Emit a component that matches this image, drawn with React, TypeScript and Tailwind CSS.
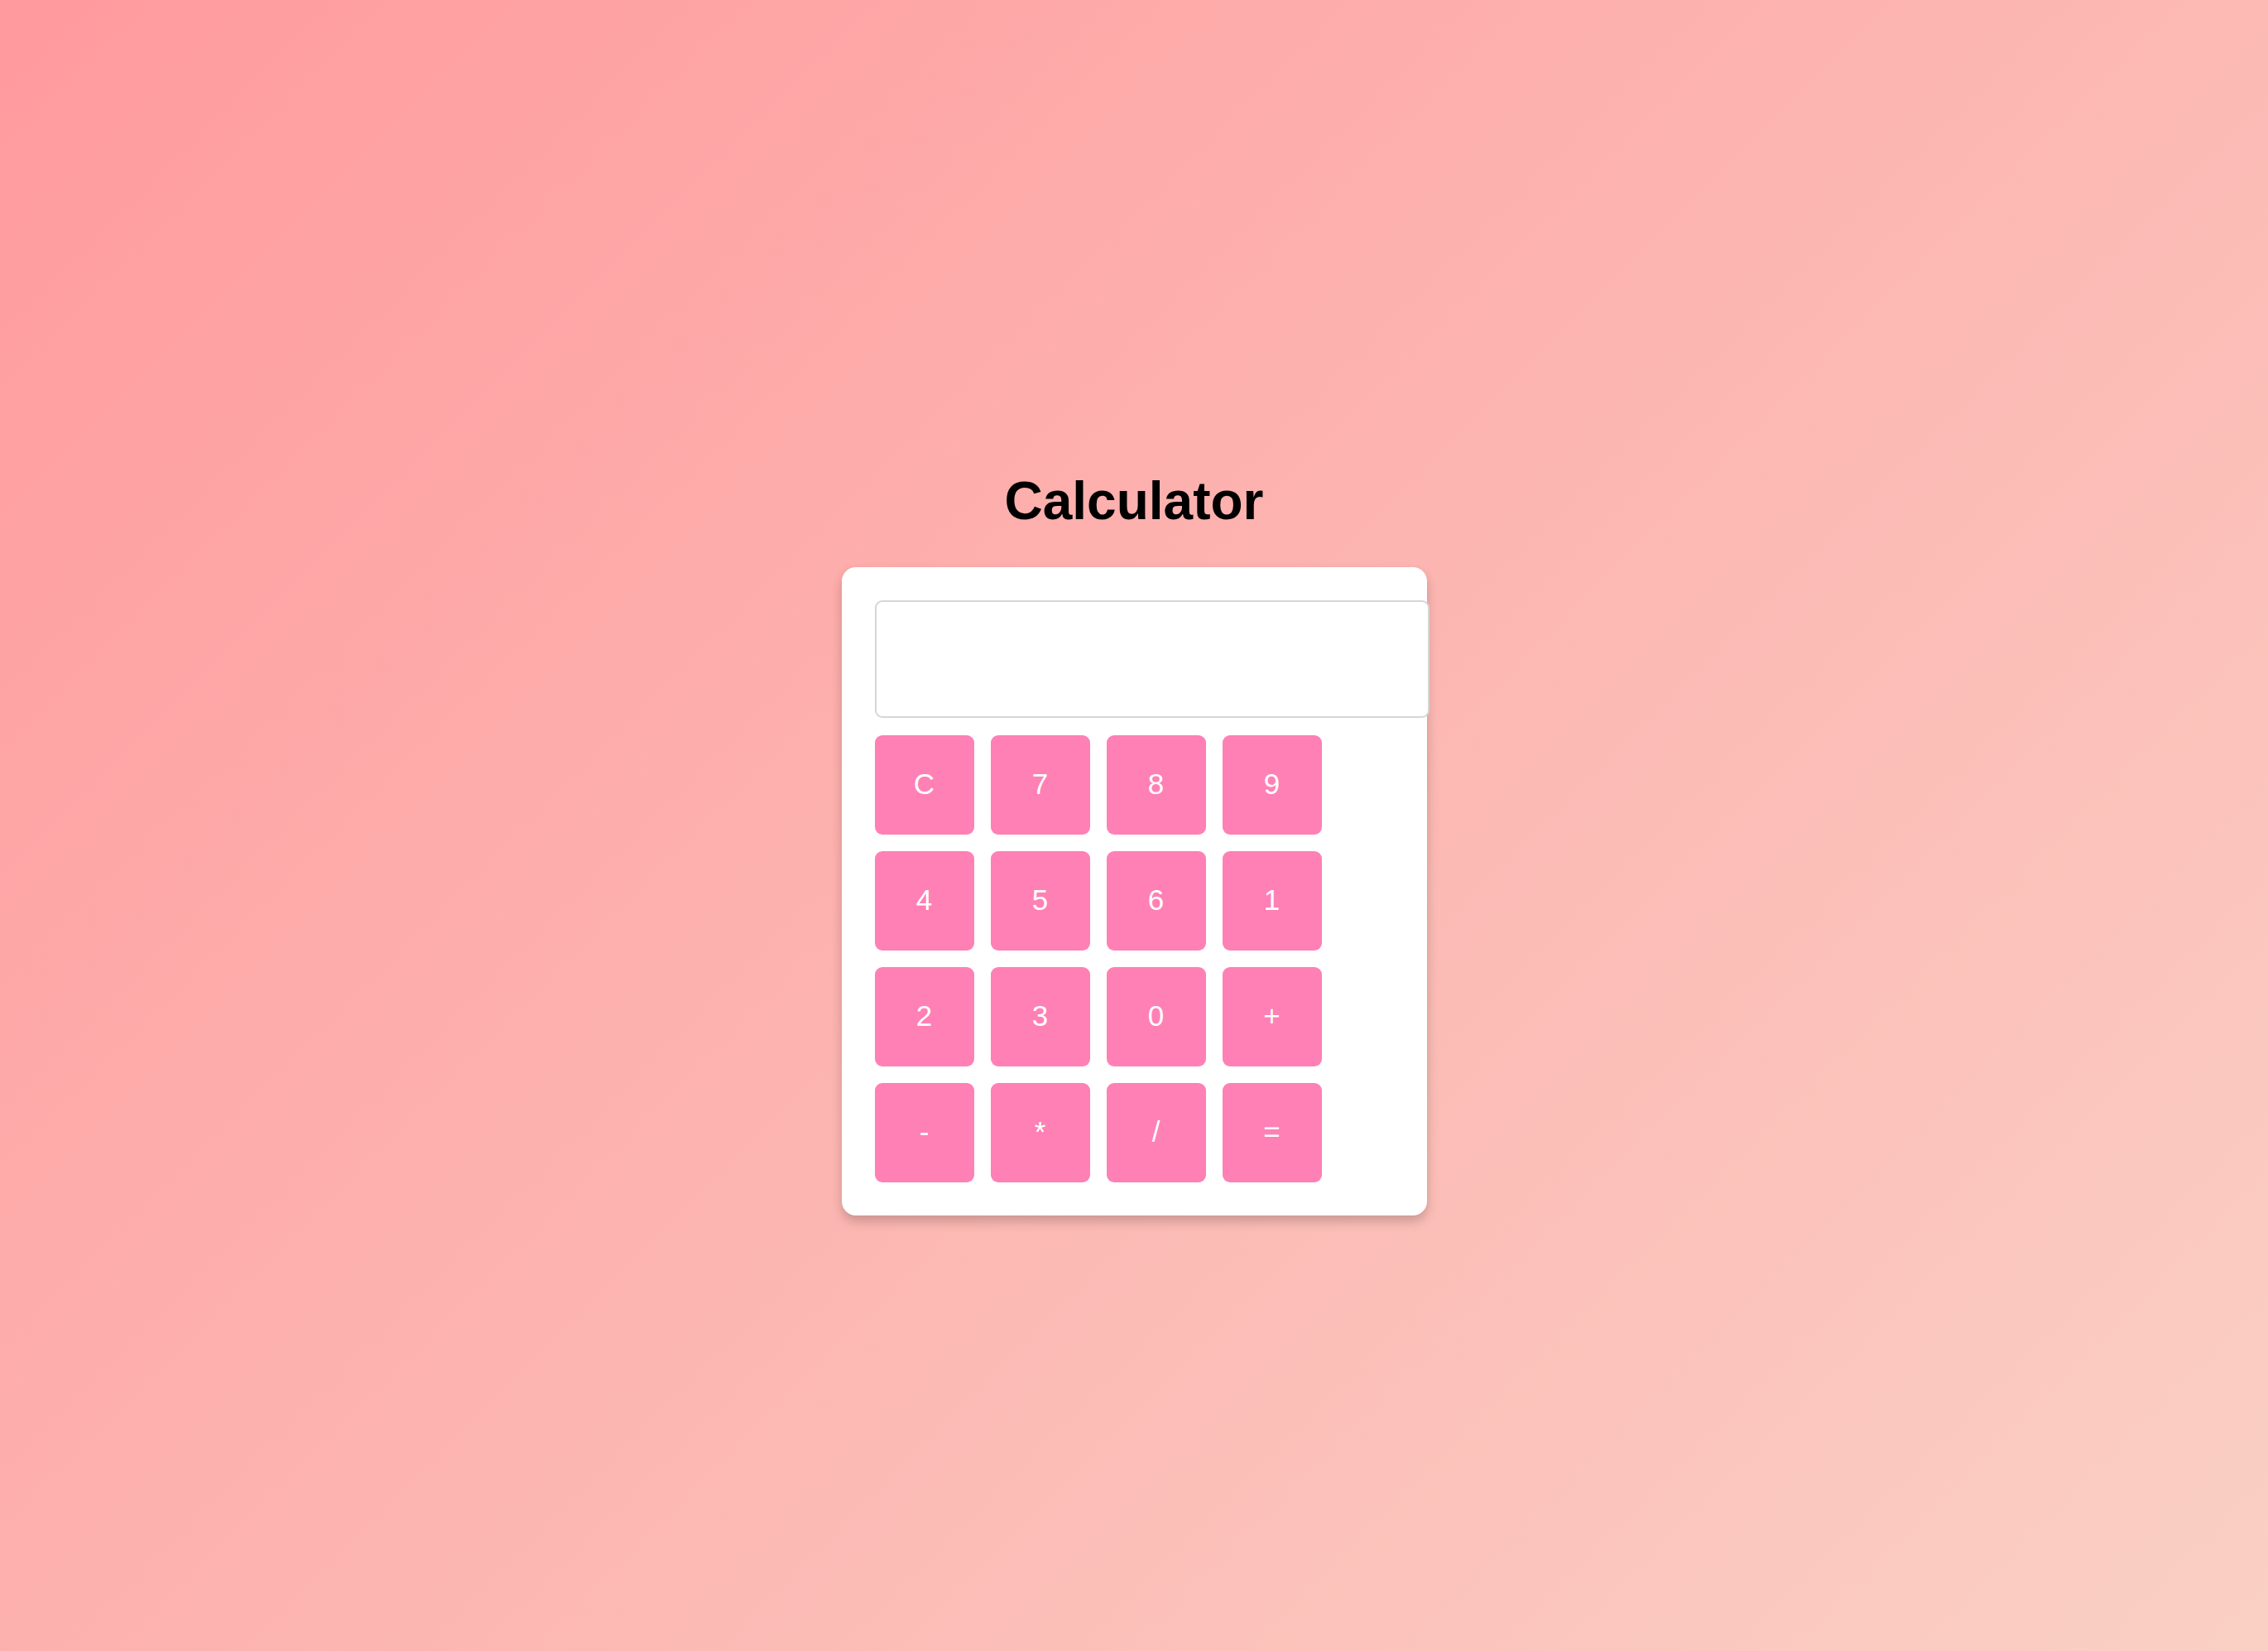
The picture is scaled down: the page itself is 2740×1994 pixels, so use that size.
const keys = ['C', '7', '8', '9', '4', '5', '6', '1', '2', '3', '0', '+', '-', '*', '/', '=']

export default function App() {
  return (
    <div className="min-h-screen flex flex-col items-center justify-center bg-[linear-gradient(135deg,#ff9a9e_0%,#fad0c4_100%)] font-['Liberation_Sans',Arial,sans-serif]">
      <h1 className="mt-[41px] mb-[43px] text-[64px] font-bold leading-[normal] text-black">Calculator</h1>

      {/* Calculator card */}
      <div className="w-[707px] bg-white rounded-[17px] p-10 shadow-[0_7px_14px_rgba(0,0,0,0.2)]">
        <input
          type="text"
          readOnly
          className="block w-[670px] h-[142px] border-2 border-[#d6d6d6] rounded-[9px] bg-white outline-none"
        />
        <div className="mt-[21px] grid grid-cols-[repeat(4,120px)] gap-5">
          {keys.map((k) => (
            <button
              key={k}
              className="w-[120px] h-[120px] rounded-[9px] bg-[#ff80b5] text-white text-[35px] flex items-center justify-center"
            >
              {k}
            </button>
          ))}
        </div>
      </div>
    </div>
  )
}
